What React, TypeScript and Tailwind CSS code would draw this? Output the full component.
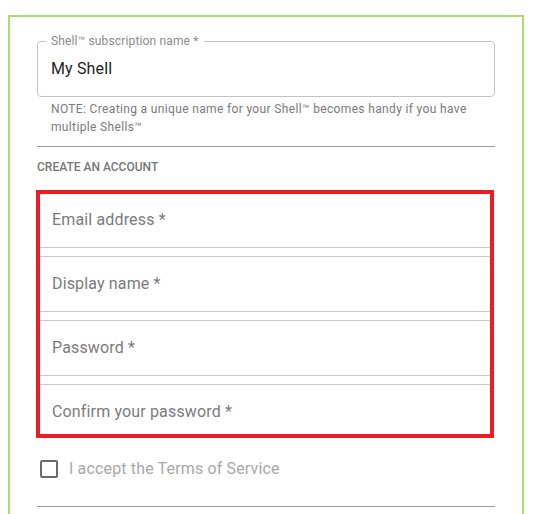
import React from "react";

const fields = ["Email address *", "Display name *", "Password *", "Confirm your password *"];

export default function App() {
  return (
    <div className="h-[514px] w-[538px] overflow-hidden bg-white" style={{ fontFamily: "Roboto, 'Liberation Sans', sans-serif" }}>
      <div className="ml-[8px] mt-[15px] h-[600px] w-[516px] border-2 border-[#a9dc6d] px-[27px] pt-[24px]">
        <div className="relative h-[56px] rounded-[4px] border border-[#c4c4c4]">
          <span className="absolute left-[8px] top-[-9px] bg-white px-[5px] text-[12px] leading-[16px] tracking-[0.15px] text-[#8a8a8a]">
            Shell™ subscription name *
          </span>
          <div className="flex h-full items-center pl-[13px] text-[16px] tracking-[0.15px] text-[#1f1f1f]">My Shell</div>
        </div>
        <p className="ml-[14px] mt-[3px] text-[12px] leading-[18px] tracking-[0.35px] text-[#7a7a7a]">
          NOTE: Creating a unique name for your Shell™ becomes handy if you have multiple Shells™
        </p>
        <div className="mt-[10px] h-px bg-[#9e9e9e]" />
        <div className="mt-[12px] text-[12px] font-medium leading-[16px] text-[#767676]">CREATE AN ACCOUNT</div>
        <div className="-ml-px mt-[15px] h-[248px] w-[458px] overflow-hidden border-4 border-[#ed1c24]">
          <div className="-mt-[2px] flex flex-col gap-[8px]">
            {fields.map((f) => (
              <div key={f} className="flex h-[56px] items-center border-y border-[#c8c8c8] pl-[12px] text-[16px] tracking-[0.15px] text-[#7b7b7b]">
                {f}
              </div>
            ))}
          </div>
        </div>
        <div className="mt-[19px] flex items-center">
          <div className="ml-[3px] h-[18px] w-[18px] rounded-[2px] border-2 border-[#6b6b6b]" />
          <span className="ml-[11px] text-[16px] tracking-[0.15px] text-[#a8a8a8]">I accept the Terms of Service</span>
        </div>
        <div className="mt-[25px] h-px bg-[#9e9e9e]" />
      </div>
    </div>
  );
}
